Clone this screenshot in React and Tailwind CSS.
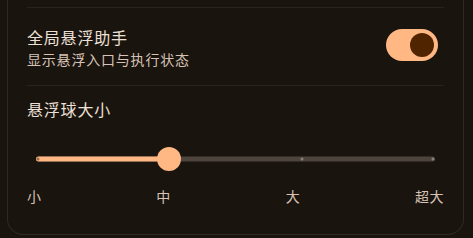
import React, { useState } from 'react';

const font = { fontFamily: '"Noto Sans CJK SC", "Noto Sans", sans-serif' };

const SizeSlider = ({ value, labels }) => {
    const steps = labels.length - 1;
    const pct = (value / steps) * 100;

    return (
        <div>
            <div className="px-[9px]">
                <div className="relative h-6">
                    {/* track */}
                    <div className="absolute left-0 right-0 top-1/2 -translate-y-1/2 h-[5px] rounded-full bg-[#4d443e]" />
                    <div className="absolute left-0 top-1/2 -translate-y-1/2 h-[5px] rounded-full bg-[#ffb783]" style={{ width: `${pct}%` }} />
                    {/* ticks */}
                    {labels.map((l, i) => (
                        <div
                            key={l}
                            className={`absolute top-1/2 -translate-y-1/2 -translate-x-1/2 w-[3px] h-[3px] rounded-full ${i <= value ? 'bg-[#9a6a48]' : 'bg-[#8a807a]'}`}
                            style={{ left: `calc(${(i / steps) * 100}% + ${i === 0 ? 2 : i === steps ? -2 : 0}px)` }}
                        />
                    ))}
                    {/* thumb */}
                    <div className="absolute top-1/2 -translate-y-1/2 -translate-x-1/2 w-6 h-6 rounded-full bg-[#ffb783]" style={{ left: `${pct}%` }} />
                </div>
            </div>
            <div className="flex justify-between mt-[15px] text-sm leading-5 tracking-[0.5px] text-[#d6c3b6]">
                {labels.map((l) => (
                    <span key={l}>{l}</span>
                ))}
            </div>
        </div>
    );
};

const App = () => {
    const [enabled, setEnabled] = useState(true);
    const labels = ['小', '中', '大', '超大'];

    return (
        <div className="w-[473px] h-[238px] overflow-hidden bg-[#1a140f]" style={font}>
            <div className="ml-[7px] mr-[9px] h-[235px] border-x border-b border-[#2f2924] rounded-b-2xl pl-[19px] pr-[19px]">
                <div className="h-[7px]" />
                <div className="h-px bg-[#29221d]" />

                {/* floating assistant toggle */}
                <div className="flex items-center justify-between h-[77px]">
                    <div className="flex flex-col">
                        <p className="text-base leading-6 tracking-[0.8px] text-[#ede0d7]">全局悬浮助手</p>
                        <p className="text-sm leading-5 tracking-[0.8px] text-[#d6c3b6]">显示悬浮入口与执行状态</p>
                    </div>
                    <button
                        onClick={() => setEnabled(!enabled)}
                        className={`w-[52px] h-8 rounded-full flex items-center px-1 mr-[6px] -mt-[3px] ${enabled ? 'bg-[#ffb783] justify-end' : 'bg-[#4d443e] justify-start'}`}
                    >
                        <span className="block w-6 h-6 rounded-full bg-[#512400]" />
                    </button>
                </div>

                <div className="h-px bg-[#29221d]" />

                {/* ball size */}
                <p className="pt-[11px] text-base leading-6 tracking-[0.8px] text-[#ede0d7]">悬浮球大小</p>
                <div className="mt-[26px]">
                    <SizeSlider value={1} labels={labels} />
                </div>
            </div>
        </div>
    );
};

export default App;
